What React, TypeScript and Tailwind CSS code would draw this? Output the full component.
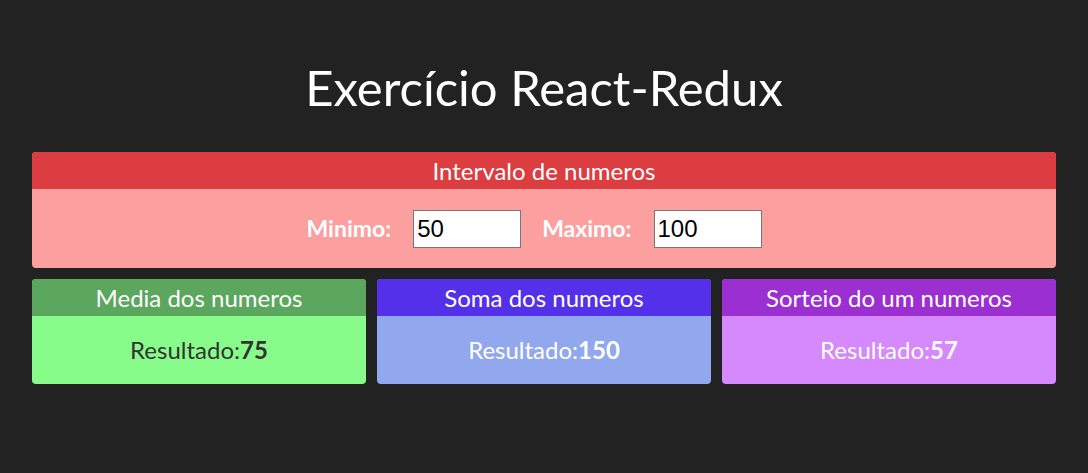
import { useState } from "react";

const font = { fontFamily: '"Trebuchet MS", Lato, "Open Sans", sans-serif' };

function Card({
  title,
  head,
  body,
  text,
  value,
}: {
  title: string;
  head: string;
  body: string;
  text: string;
  value: number;
}) {
  return (
    <div className={`flex-1 overflow-hidden rounded-[4px] ${body}`}>
      <div className={`h-[37px] flex items-center justify-center text-[24px] text-white ${head}`}>
        {title}
      </div>
      <div className={`h-[68px] flex items-center justify-center text-[24px] ${text}`}>
        Resultado:<b>{value}</b>
      </div>
    </div>
  );
}

export default function App() {
  const [min, setMin] = useState("50");
  const [max, setMax] = useState("100");

  return (
    <main className="min-h-screen bg-[#222222] px-8" style={font}>
      <h1 className="pt-[55px] pb-[33px] text-center text-[49px] leading-[64px] text-white">
        Exercício React-Redux
      </h1>

      <section className="overflow-hidden rounded-[4px] bg-[#fb9f9f]">
        <div className="h-[37px] flex items-center justify-center bg-[#db3d40] text-[24px] text-white">
          Intervalo de numeros
        </div>
        <div className="h-[79px] pr-[20px] flex items-center justify-center gap-[22px] text-[23px] font-bold text-white">
          <label>Minimo:</label>
          <input
            value={min}
            onChange={(e) => setMin(e.target.value)}
            className="h-[38px] w-[108px] border border-[#767676] bg-white px-[3px] text-[24px] font-normal text-black"
            style={{ fontFamily: '"Liberation Sans", Arial, sans-serif' }}
          />
          <label className="ml-[-1px]">Maximo:</label>
          <input
            value={max}
            onChange={(e) => setMax(e.target.value)}
            className="h-[38px] w-[108px] border border-[#767676] bg-white px-[3px] text-[24px] font-normal text-black"
            style={{ fontFamily: '"Liberation Sans", Arial, sans-serif' }}
          />
        </div>
      </section>

      <div className="mt-[11px] flex gap-[11px]">
        <Card title="Media dos numeros" head="bg-[#5aa75d]" body="bg-[#88fc8b]" text="text-[#333333]" value={75} />
        <Card title="Soma dos numeros" head="bg-[#5430eb]" body="bg-[#91a8ee]" text="text-white" value={150} />
        <Card title="Sorteio do um numeros" head="bg-[#9c2fd2]" body="bg-[#d689fc]" text="text-white" value={57} />
      </div>
    </main>
  );
}
